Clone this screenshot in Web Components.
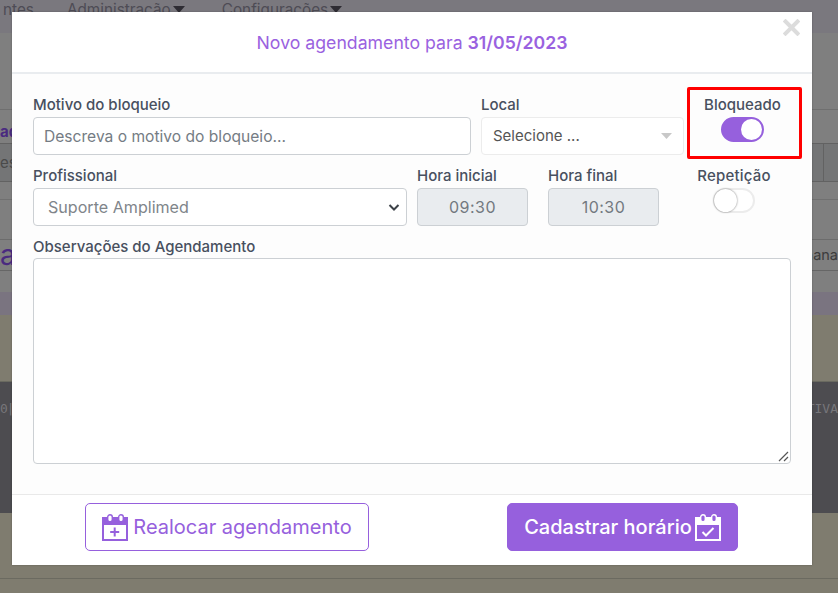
<!DOCTYPE html>
<html lang="pt-BR"><head><meta charset="utf-8"><title>Novo agendamento</title>
<style>
html,body{margin:0;padding:0;height:100%;overflow:hidden}
body{font-family:Inter,"Liberation Sans",sans-serif}
</style></head><body>
<template id="t-back">
<style>
:host{display:block;position:absolute;inset:0;width:838px;height:593px;overflow:hidden;background:#7f7f7f;color:#3f3a48;font:14px Inter,sans-serif}
div{box-sizing:border-box}
.nav{height:33px;background:#7a787e;display:flex;color:#4e4c55;font-size:15.3px;line-height:16px;padding:2px 0 0 3px}
.nav span{white-space:nowrap}
.nav i{display:inline-block;width:0;height:0;border:6px solid transparent;border-top:7px solid #2e2c33;border-bottom:0;margin-left:2px;vertical-align:2px}
.r1{height:77px;border-bottom:1px solid #6f6f6f}
.r2{height:34px;border-bottom:1px solid #626262;color:#4a2a80;font-weight:700;font-size:15px;line-height:44px}
.r3{height:38px;border-bottom:1px solid #626262;font-size:15px;line-height:38px;color:#4a4a4a;background:#747576;display:flex;justify-content:space-between}
.r3 u{width:14px;border-left:1px solid #626262}
.r4{height:18px;border-bottom:1px solid #707070}
.r5{height:40px;border-bottom:1px solid #6c6c6c}
.r6{height:31px;border-bottom:1px solid #666;color:#4a2a80;font-size:28px;line-height:30px;display:flex;justify-content:space-between}
.r6 b{font-weight:400;color:#3c3c3c;font-size:14.5px}
.r7{height:21px}
.r8{height:23px;background:#7a7480}
.r9{height:67px;background:#7f7c6f;border-bottom:1px solid #6a6a60}
.r10{height:131px;background:#4d4c50;color:#77767a;font:13px "DejaVu Sans Mono",monospace;line-height:54px;display:flex;justify-content:space-between}
.r10 span:first-child{letter-spacing:-1px}
.r11{height:66px;background:#7f7c6f;border-bottom:1px solid #6b6a60}
.r12{height:14px;background:#7f7c6f}
</style>
<div class="nav"><span>ntes</span><span style="margin-left:33px">Administração<i></i></span><span style="margin-left:37px">Configurações<i></i></span></div>
<div class="r1"></div>
<div class="r2">ad</div>
<div class="r3"><span>es</span><u></u></div>
<div class="r4"></div>
<div class="r5"></div>
<div class="r6"><span>a</span><b>nana</b></div>
<div class="r7"></div>
<div class="r8"></div>
<div class="r9"></div>
<div class="r10"><span>0|</span><span>TIVA</span></div>
<div class="r11"></div>
<div class="r12"></div>
</template>

<template id="t-modal">
<style>
:host{display:flex;flex-direction:column;position:absolute;left:12px;top:12px;width:800px;height:553px;background:#fff;box-sizing:border-box;box-shadow:0 0 2px rgba(0,0,0,.25);font-family:Inter,"Liberation Sans",sans-serif}
header{height:60px;border-bottom:2px solid #e9ecef;display:flex;align-items:center;justify-content:center;position:relative;color:#9a62e0;font-size:17.7px;flex:none}
.x{position:absolute;right:12px;top:3px;width:18px;height:24px;display:flex;align-items:center;justify-content:center}
main{flex:1;background:#fdfdfd;padding:0 21px;min-height:0}
footer{height:71px;border-top:1px solid #e9e9e9;flex:none;display:flex;align-items:flex-start;padding:8px 0 0 73px;gap:138px;box-sizing:border-box}
</style>
<header><span><slot name="title"></slot></span><span class="x"><svg width="17" height="17" viewBox="0 0 17 17"><path d="M2.500 2.500l12 12M14.500 2.500l-12 12" stroke="#dcdcdc" stroke-width="4" stroke-linecap="square"/></svg></span></header>
<main><slot></slot></main>
<footer><slot name="foot"></slot></footer>
</template>

<template id="t-field">
<style>
:host{display:block;flex:none;color:#4b5563;font-family:Inter,"Liberation Sans",sans-serif}
label{display:block;font-size:15px;font-weight:500;line-height:18px;height:21px;white-space:nowrap;color:#48505f}
:host([kind=area]) label{height:20px}
.b{height:38px;box-sizing:border-box;border:1px solid #ccd0d4;border-radius:4px;background:#fff;display:flex;align-items:center;color:#757c84;position:relative;white-space:nowrap}
:host([kind=input]) .b{padding-left:10px;font-size:15.6px}
:host([kind=select]) .b{padding-left:14px;color:#80858a;font-size:16.1px}
:host([kind=time]) .b{background:#e9ecef;justify-content:center;color:#737980;font-size:16px;letter-spacing:.5px}
:host([kind=choice]) .b{padding:0 0 2px 11px;border-color:#ececec;color:#555;font-size:15px}
svg{position:absolute}
:host([kind=area]) .b{height:206px}
.c1,.c2,.c3{display:none}
:host([kind=select]) .c1{display:block}
:host([kind=choice]) .c2{display:block}
:host([kind=area]) .c3{display:block}
</style>
<label><slot name="label"></slot></label>
<div class="b"><slot></slot>
<svg class="c1" style="right:6px;top:14px" width="12" height="9" viewBox="0 0 12 9"><path d="M1.500 2l4.500 4.500L10.500 2" fill="none" stroke="#3d4248" stroke-width="2"/></svg>
<svg class="c2" style="right:11px;top:15px" width="11" height="6" viewBox="0 0 11 6"><path d="M0 0h11L5.500 6z" fill="#c8c8c8"/></svg>
<svg class="c3" style="right:0;bottom:0" width="14" height="14" viewBox="0 0 14 14"><path d="M3 12L12 3M8 12l4-4" stroke="#555" stroke-width="1.200" fill="none"/></svg>
</div>
</template>

<template id="t-switch">
<style>
:host{display:flex;flex:none;flex-direction:column;align-items:center;font-family:Inter,"Liberation Sans",sans-serif}
label{font-size:15px;font-weight:500;line-height:18px;color:#48505f;white-space:nowrap}
.t{width:42px;height:25px;box-sizing:border-box;border-radius:13px;border:2px solid #ececec;background:#fff;position:relative;margin-top:3px;display:flex}
.k{width:23px;height:23px;margin:-1px;border-radius:50%;background:#fff;box-shadow:0 0 2px rgba(0,0,0,.55)}
:host([on]) .t{width:43px;background:#9660dd;border-color:#9660dd;justify-content:flex-end}
:host([on]) .k{margin:0;width:21px;height:21px;box-shadow:none}
</style>
<label><slot></slot></label><div class="t"><div class="k"></div></div>
</template>

<template id="t-btn">
<style>
:host{display:inline-flex;box-sizing:border-box;height:48px;align-items:center;justify-content:center;border-radius:5px;font-size:20px;font-family:Inter,"Liberation Sans",sans-serif;white-space:nowrap;border:1px solid #9660dd;color:#9660dd;background:#fff;flex:none}
:host([solid]){background:#9660dd;color:#fff;font-weight:500}
</style>
<slot></slot>
</template>

<script>
function reg(n,t){customElements.define(n,class extends HTMLElement{constructor(){super();this.attachShadow({mode:'open'}).appendChild(document.getElementById(t).content.cloneNode(true))}})}
reg('x-back','t-back');reg('x-modal','t-modal');reg('x-field','t-field');reg('x-switch','t-switch');reg('x-btn','t-btn');
</script>
<style>
.row{display:flex;align-items:flex-start;box-sizing:border-box}
.redbox{flex:none;width:115px;height:72px;box-sizing:border-box;border:3px solid #f00;border-radius:2px;display:flex;justify-content:center;padding:6px 4px 0 0;margin-left:3px;margin-top:-9px}
.ic{display:block;flex:none}
</style>
<x-back></x-back>
<x-modal>
<span slot="title">Novo agendamento para <b style="font-weight:600">31/05/2023</b></span>
<div class="row" style="padding-top:22px;height:75px">
<x-field kind="input" style="width:438px"><span slot="label">Motivo do bloqueio</span>Descreva o motivo do bloqueio...</x-field>
<x-field kind="choice" style="width:203px;margin-left:10px"><span slot="label">Local</span>Selecione ...</x-field>
<div class="redbox"><x-switch on>Bloqueado</x-switch></div>
</div>
<div class="row" style="height:70px;padding-top:18px">
<x-field kind="select" style="width:374px"><span slot="label">Profissional</span>Suporte Amplimed</x-field>
<x-field kind="time" style="width:111px;margin-left:10px"><span slot="label">Hora inicial</span>09:30</x-field>
<x-field kind="time" style="width:111px;margin-left:20px"><span slot="label">Hora final</span>10:30</x-field>
<x-switch style="width:74px;margin-left:38px;letter-spacing:.2px">Repetição</x-switch>
</div>
<x-field kind="area" style="width:758px;margin-top:19px"><span slot="label">Observações do Agendamento</span></x-field>
<x-btn slot="foot" style="width:284px;gap:5px"><svg class="ic" width="26" height="27" viewBox="0 0 26 27"><path d="M1 5h24v21H1z" fill="none" stroke="#9660dd" stroke-width="2"/><path d="M0 3h26v8H0z" fill="#9660dd"/><rect x="5.700" y=".7" width="4.600" height="7" rx="2.300" fill="#fff" stroke="#9660dd" stroke-width="1.400"/><rect x="16.700" y=".7" width="4.600" height="7" rx="2.300" fill="#fff" stroke="#9660dd" stroke-width="1.400"/><path d="M12.700 13.500v9M8.200 18h9" stroke="#9660dd" stroke-width="2"/></svg>Realocar agendamento</x-btn>
<x-btn slot="foot" solid style="width:231px;gap:3px"><span>Cadastrar horário</span><svg class="ic" width="26" height="27" viewBox="0 0 26 27"><path d="M1 5h24v21H1z" fill="none" stroke="#fff" stroke-width="2"/><path d="M0 3h26v8H0z" fill="#fff"/><rect x="5.700" y=".7" width="4.600" height="7" rx="2.300" fill="#9660dd" stroke="#fff" stroke-width="1.400"/><rect x="16.700" y=".7" width="4.600" height="7" rx="2.300" fill="#9660dd" stroke="#fff" stroke-width="1.400"/><path d="M7.500 18l3.500 3.500 7.500-7.500" fill="none" stroke="#fff" stroke-width="2"/></svg></x-btn>
</x-modal>
</body></html>
